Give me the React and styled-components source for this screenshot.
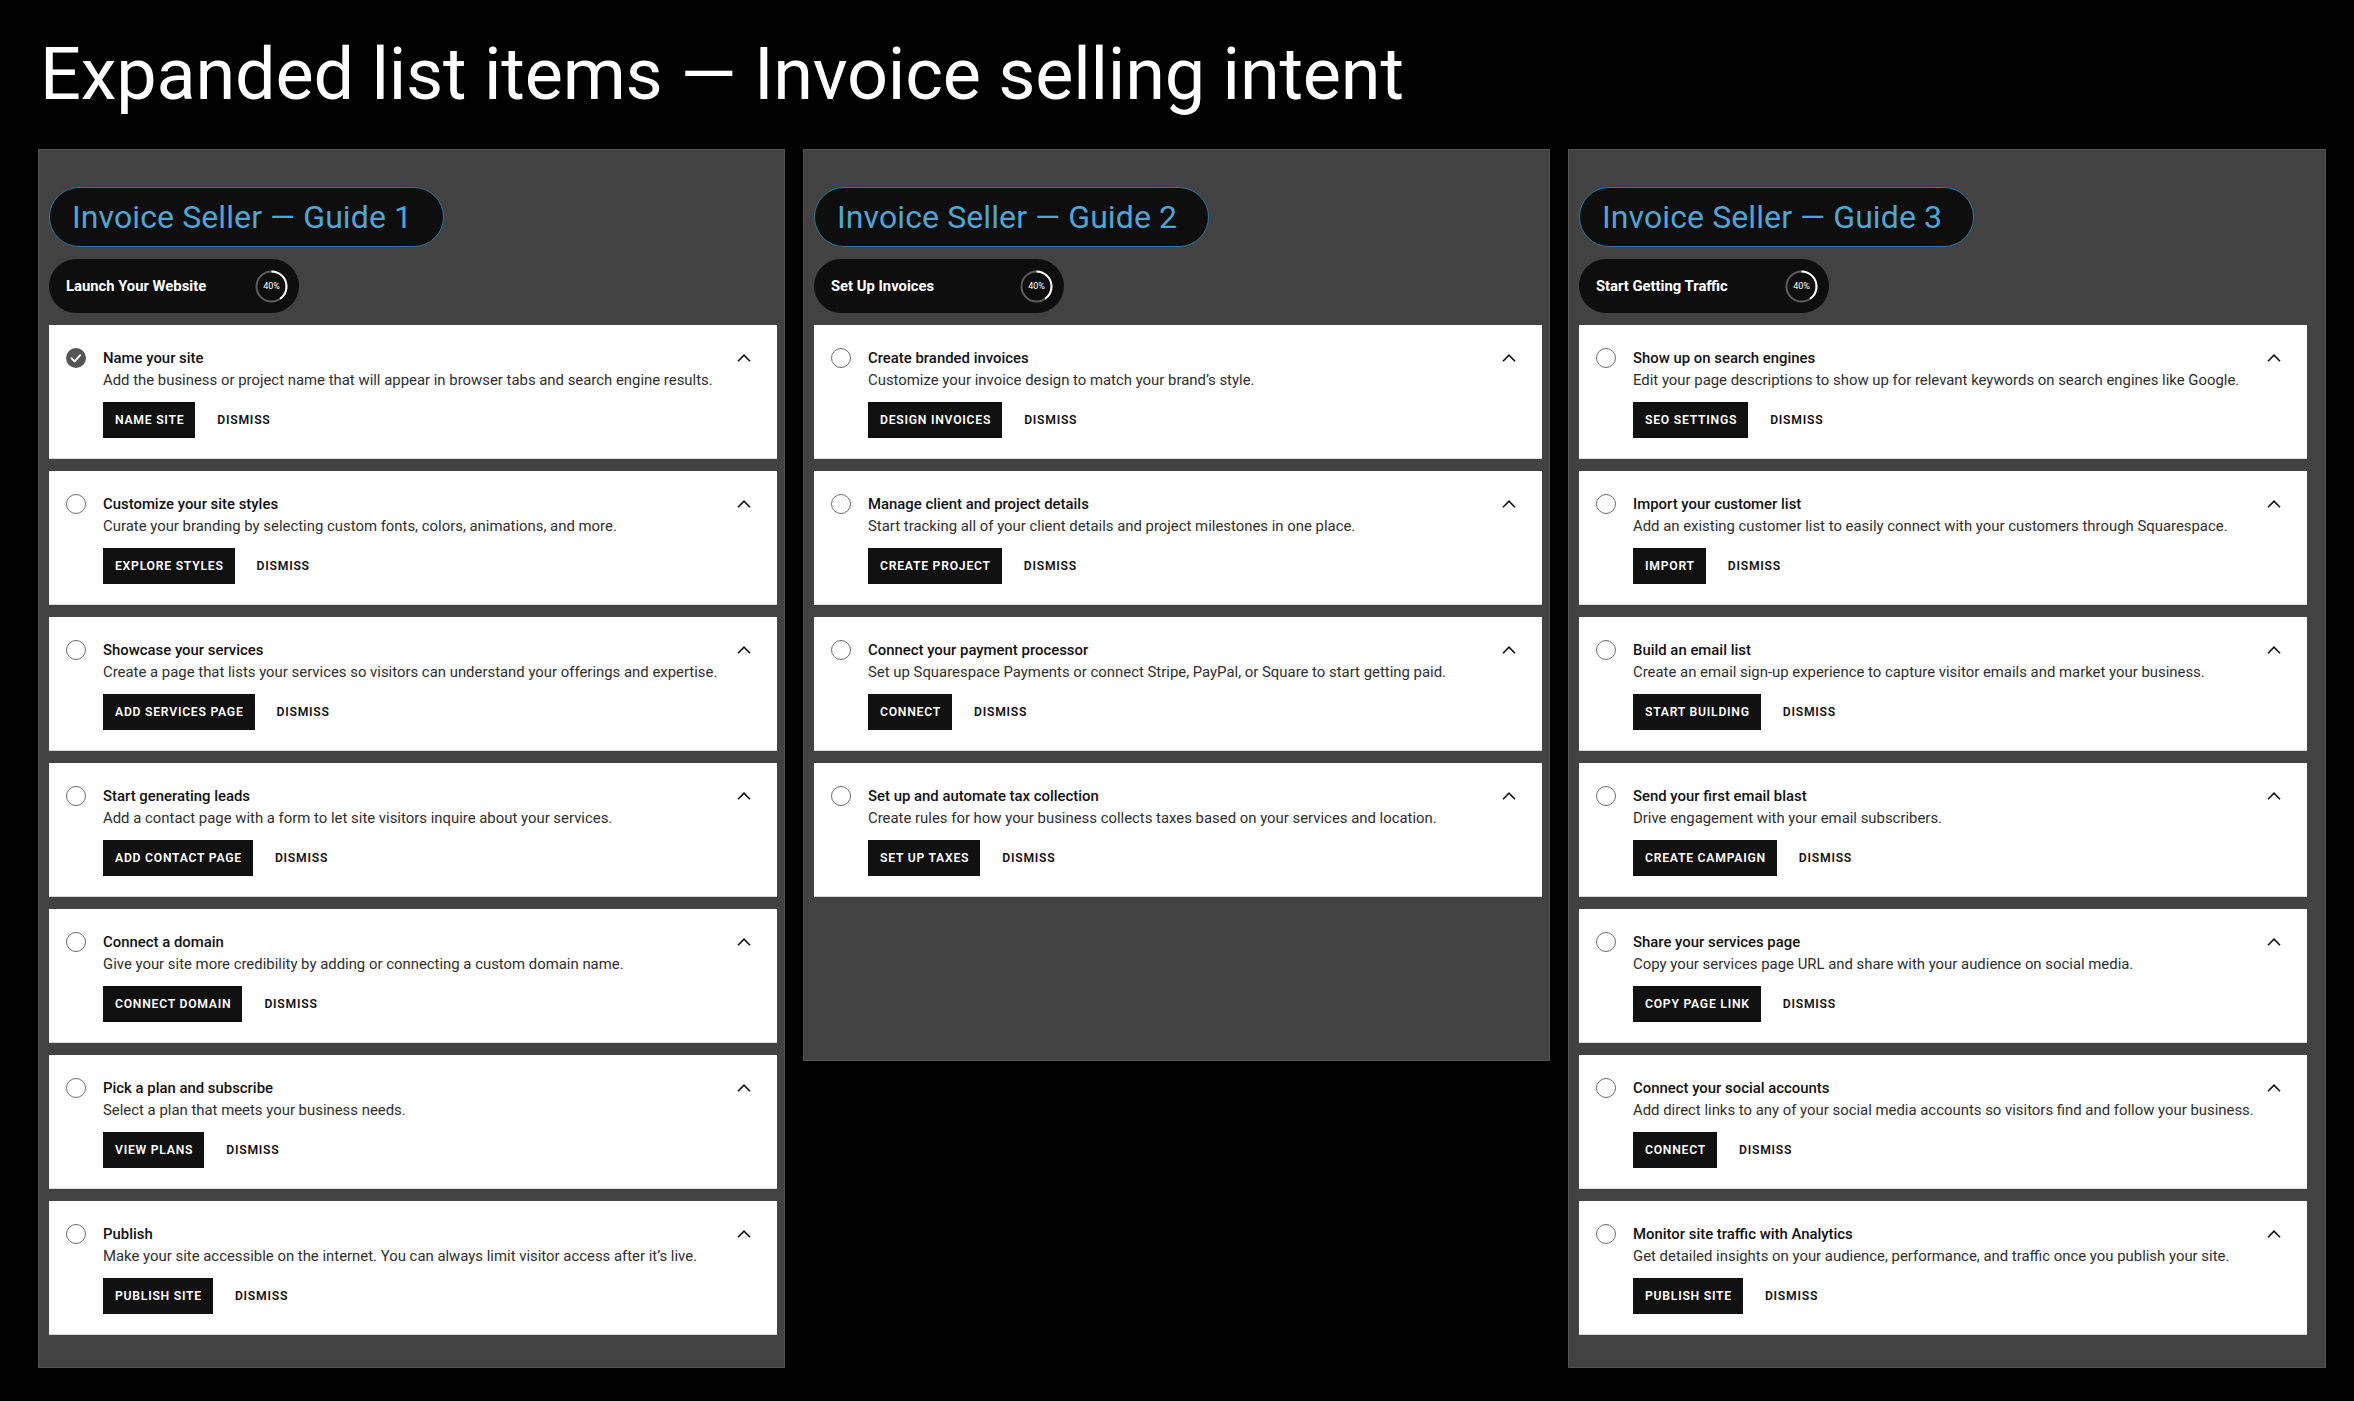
import React from "react";
import styled, { createGlobalStyle } from "styled-components";

const GlobalStyle = createGlobalStyle`
  * { box-sizing: border-box; }
  body {
    margin: 0;
    background: #000;
    font-family: Roboto, "Liberation Sans", sans-serif;
  }
`;

const guides = [
  {
    title: "Invoice Seller — Guide 1",
    section: "Launch Your Website",
    width: 747,
    items: [
      { title: "Name your site", desc: "Add the business or project name that will appear in browser tabs and search engine results.", action: "NAME SITE", done: true },
      { title: "Customize your site styles", desc: "Curate your branding by selecting custom fonts, colors, animations, and more.", action: "EXPLORE STYLES" },
      { title: "Showcase your services", desc: "Create a page that lists your services so visitors can understand your offerings and expertise.", action: "ADD SERVICES PAGE" },
      { title: "Start generating leads", desc: "Add a contact page with a form to let site visitors inquire about your services.", action: "ADD CONTACT PAGE" },
      { title: "Connect a domain", desc: "Give your site more credibility by adding or connecting a custom domain name.", action: "CONNECT DOMAIN" },
      { title: "Pick a plan and subscribe", desc: "Select a plan that meets your business needs.", action: "VIEW PLANS" },
      { title: "Publish", desc: "Make your site accessible on the internet. You can always limit visitor access after it’s live.", action: "PUBLISH SITE" },
    ],
  },
  {
    title: "Invoice Seller — Guide 2",
    section: "Set Up Invoices",
    width: 747,
    height: 912,
    items: [
      { title: "Create branded invoices", desc: "Customize your invoice design to match your brand’s style.", action: "DESIGN INVOICES" },
      { title: "Manage client and project details", desc: "Start tracking all of your client details and project milestones in one place.", action: "CREATE PROJECT" },
      { title: "Connect your payment processor", desc: "Set up Squarespace Payments or connect Stripe, PayPal, or Square to start getting paid.", action: "CONNECT" },
      { title: "Set up and automate tax collection", desc: "Create rules for how your business collects taxes based on your services and location.", action: "SET UP TAXES" },
    ],
  },
  {
    title: "Invoice Seller — Guide 3",
    section: "Start Getting Traffic",
    width: 758,
    items: [
      { title: "Show up on search engines", desc: "Edit your page descriptions to show up for relevant keywords on search engines like Google.", action: "SEO SETTINGS" },
      { title: "Import your customer list", desc: "Add an existing customer list to easily connect with your customers through Squarespace.", action: "IMPORT" },
      { title: "Build an email list", desc: "Create an email sign-up experience to capture visitor emails and market your business.", action: "START BUILDING" },
      { title: "Send your first email blast", desc: "Drive engagement with your email subscribers.", action: "CREATE CAMPAIGN" },
      { title: "Share your services page", desc: "Copy your services page URL and share with your audience on social media.", action: "COPY PAGE LINK" },
      { title: "Connect your social accounts", desc: "Add direct links to any of your social media accounts so visitors find and follow your business.", action: "CONNECT" },
      { title: "Monitor site traffic with Analytics", desc: "Get detailed insights on your audience, performance, and traffic once you publish your site.", action: "PUBLISH SITE" },
    ],
  },
];

const Page = styled.div`
  min-height: 100vh;
  background: #000;
  padding: 39px 0 40px 38px;
`;

const Heading = styled.h1`
  margin: 0 0 38px 2px;
  font-family: Roboto, "Liberation Sans", sans-serif;
  font-size: 72px;
  line-height: 72px;
  font-weight: 400;
  letter-spacing: -0.2px;
  color: #fff;
`;

const Columns = styled.div`
  display: flex;
  align-items: flex-start;
  gap: 18px;
`;

const Panel = styled.section`
  width: ${(p) => p.$width}px;
  min-height: ${(p) => (p.$height ? `${p.$height}px` : "auto")};
  background: #424242;
  border: 1px solid #545454;
  padding: 37px 10px 32px;
  display: flex;
  flex-direction: column;
  gap: 12px;
`;

const GuidePill = styled.div`
  align-self: flex-start;
  height: 60px;
  display: flex;
  align-items: center;
  padding: 0 31px 0 22px;
  background: #0e0e0e;
  border: 1px solid #2a76a0;
  border-radius: 30px;
  color: #4fa6d4;
  font-size: 32px;
  font-weight: 400;
  letter-spacing: 0.1px;
`;

const SectionPill = styled.div`
  width: 250px;
  height: 54px;
  display: flex;
  align-items: center;
  justify-content: space-between;
  padding: 0 11px 0 17px;
  background: #0e0e0e;
  border-radius: 27px;
  color: #fff;
  font-size: 14.8px;
  font-weight: 700;
`;

const Card = styled.div`
  width: 728px;
  height: 134px;
  background: #fff;
  border-bottom: 1px solid #d9d9d9;
  padding: 23px 26px 0 17px;
  display: flex;
  align-items: flex-start;
  gap: 17px;
`;

const Body = styled.div`
  flex: 1;
  min-width: 0;
  display: flex;
  flex-direction: column;
`;

const ItemTitle = styled.div`
  font-size: 14.9px;
  line-height: 20px;
  font-weight: 500;
  color: #111;
`;

const ItemDesc = styled.div`
  margin-top: 2px;
  font-size: 14.9px;
  line-height: 20px;
  font-weight: 400;
  color: #2e2e2e;
  white-space: nowrap;
`;

const Actions = styled.div`
  margin-top: 12px;
  display: flex;
  align-items: center;
  gap: 22px;
`;

const ActionButton = styled.button`
  height: 36px;
  padding: ${(p) => (p.$primary ? "0 11px 0 12px" : "0")};
  border: none;
  border-radius: 0;
  background: ${(p) => (p.$primary ? "#111" : "transparent")};
  color: ${(p) => (p.$primary ? "#fff" : "#111")};
  font-family: Roboto, "Liberation Sans", sans-serif;
  font-size: 12.2px;
  font-weight: 600;
  letter-spacing: 0.75px;
`;

const IconSlot = styled.div`
  width: ${(p) => p.$w}px;
  height: 20px;
  display: flex;
  align-items: center;
  justify-content: center;
  flex-shrink: 0;
`;

const RingWrap = styled.div`
  width: 33px;
  height: 33px;
  position: relative;
  display: flex;
  align-items: center;
  justify-content: center;
`;

const RingLabel = styled.span`
  position: absolute;
  font-size: 9px;
  font-weight: 400;
  color: #fff;
`;

function Ring({ value }) {
  const r = 15;
  const c = 2 * Math.PI * r;
  return (
    <RingWrap>
      <svg width="33" height="33" viewBox="0 0 33 33">
        <circle cx="16.5" cy="16.5" r={r} fill="none" stroke="#5c5c5c" strokeWidth="2" />
        <circle
          cx="16.5"
          cy="16.5"
          r={r}
          fill="none"
          stroke="#fff"
          strokeWidth="2"
          strokeDasharray={`${(c * value) / 100} ${c}`}
          transform="rotate(-90 16.5 16.5)"
        />
      </svg>
      <RingLabel>{value}%</RingLabel>
    </RingWrap>
  );
}

function CheckMark({ done }) {
  return (
    <IconSlot $w={20}>
      {done ? (
        <svg width="20" height="20" viewBox="0 0 20 20">
          <circle cx="10" cy="10" r="10" fill="#555" />
          <path d="M5.6 10.4l3 3 5.6-6.2" fill="none" stroke="#fff" strokeWidth="2" strokeLinecap="round" strokeLinejoin="round" />
        </svg>
      ) : (
        <svg width="20" height="20" viewBox="0 0 20 20">
          <circle cx="10" cy="10" r="9.5" fill="#fff" stroke="#6b6b6b" strokeWidth="1" />
        </svg>
      )}
    </IconSlot>
  );
}

function Chevron() {
  return (
    <IconSlot $w={14}>
      <svg width="14" height="8" viewBox="0 0 14 8">
        <path d="M1 7.2L7 1.2l6 6" fill="none" stroke="#111" strokeWidth="1.6" />
      </svg>
    </IconSlot>
  );
}

function Item({ item }) {
  return (
    <Card>
      <CheckMark done={item.done} />
      <Body>
        <ItemTitle>{item.title}</ItemTitle>
        <ItemDesc>{item.desc}</ItemDesc>
        <Actions>
          <ActionButton $primary>{item.action}</ActionButton>
          <ActionButton>DISMISS</ActionButton>
        </Actions>
      </Body>
      <Chevron />
    </Card>
  );
}

export default function App() {
  return (
    <>
      <GlobalStyle />
      <Page>
        <Heading>Expanded list items — Invoice selling intent</Heading>
        <Columns>
          {guides.map((g) => (
            <Panel key={g.title} $width={g.width} $height={g.height}>
              <GuidePill>{g.title}</GuidePill>
              <SectionPill>
                {g.section}
                <Ring value={40} />
              </SectionPill>
              {g.items.map((it) => (
                <Item key={it.title} item={it} />
              ))}
            </Panel>
          ))}
        </Columns>
      </Page>
    </>
  );
}
